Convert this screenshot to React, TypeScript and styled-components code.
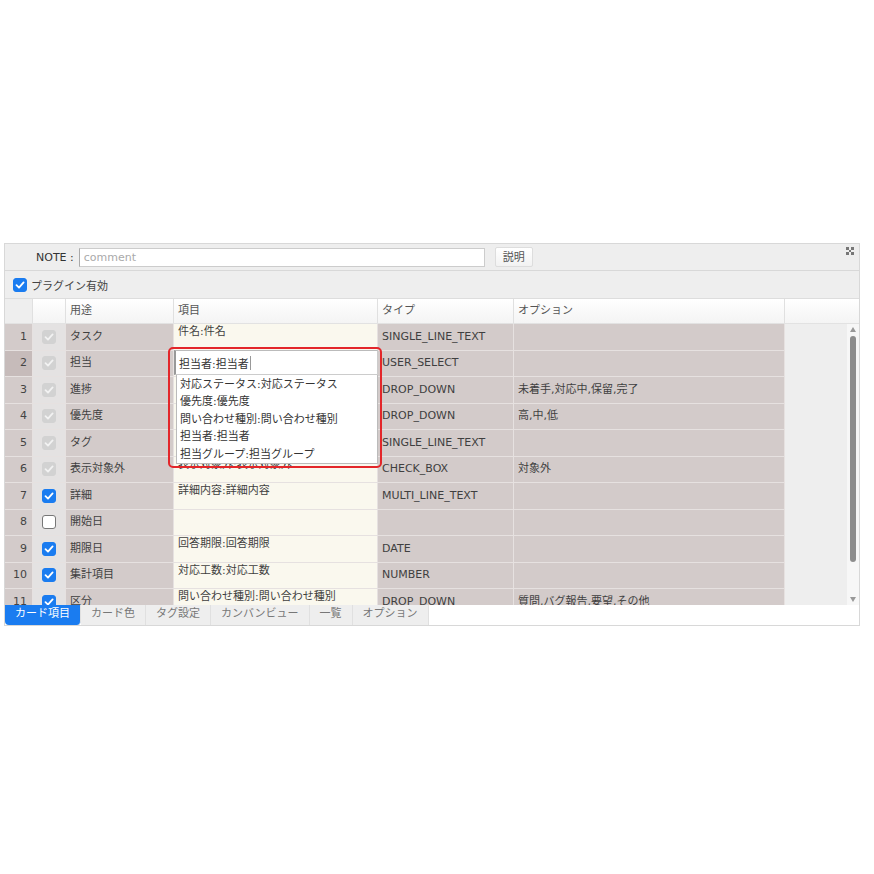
import styled, { createGlobalStyle } from 'styled-components';

const GlobalStyle = createGlobalStyle`
  html, body {
    margin: 0;
    padding: 0;
    background: #fff;
    font-family: "DejaVu Sans", "Noto Sans CJK JP", sans-serif;
    font-size: 11px;
    color: #444;
  }
`;

type Row = {
  no: number;
  check: 'locked' | 'on' | 'off';
  usage: string;
  item: string;
  type: string;
  option: string;
};

const rows: Row[] = [
  { no: 1, check: 'locked', usage: 'タスク', item: '件名:件名', type: 'SINGLE_LINE_TEXT', option: '' },
  { no: 2, check: 'locked', usage: '担当', item: '', type: 'USER_SELECT', option: '' },
  { no: 3, check: 'locked', usage: '進捗', item: '', type: 'DROP_DOWN', option: '未着手,対応中,保留,完了' },
  { no: 4, check: 'locked', usage: '優先度', item: '', type: 'DROP_DOWN', option: '高,中,低' },
  { no: 5, check: 'locked', usage: 'タグ', item: '', type: 'SINGLE_LINE_TEXT', option: '' },
  { no: 6, check: 'locked', usage: '表示対象外', item: '表示対象外:表示対象外', type: 'CHECK_BOX', option: '対象外' },
  { no: 7, check: 'on', usage: '詳細', item: '詳細内容:詳細内容', type: 'MULTI_LINE_TEXT', option: '' },
  { no: 8, check: 'off', usage: '開始日', item: '', type: '', option: '' },
  { no: 9, check: 'on', usage: '期限日', item: '回答期限:回答期限', type: 'DATE', option: '' },
  { no: 10, check: 'on', usage: '集計項目', item: '対応工数:対応工数', type: 'NUMBER', option: '' },
  { no: 11, check: 'on', usage: '区分', item: '問い合わせ種別:問い合わせ種別', type: 'DROP_DOWN', option: '質問,バグ報告,要望,その他' },
];

const options = [
  '対応ステータス:対応ステータス',
  '優先度:優先度',
  '問い合わせ種別:問い合わせ種別',
  '担当者:担当者',
  '担当グループ:担当グループ',
];

const tabs = ['カード項目', 'カード色', 'タグ設定', 'カンバンビュー', '一覧', 'オプション'];

const COLS = '28px 33px 108px 204px 136px 271px 1fr';

const Panel = styled.div`
  position: relative;
  margin: 243px 0 0 4px;
  width: 856px;
  box-sizing: border-box;
  border: 1px solid #d8d8d8;
  background: #eee;
`;

const Toolbar = styled.div`
  display: flex;
  align-items: center;
  height: 26px;
  padding-left: 31px;
  border-bottom: 1px solid #d8d8d8;
  gap: 4px;
`;

const NoteLabel = styled.span`
  color: #333;
  margin-right: 1px;
`;

const NoteInput = styled.div`
  width: 406px;
  height: 19px;
  box-sizing: border-box;
  border: 1px solid #ccc;
  border-left-color: #aaa;
  background: #fff;
  color: #aaa;
  padding-left: 4px;
  line-height: 17px;
`;

const Button = styled.div`
  margin-left: 6px;
  height: 20px;
  padding: 0 7px;
  line-height: 19px;
  box-sizing: border-box;
  border: 1px solid #ddd;
  border-radius: 2px;
  background: linear-gradient(#fff, #f2f2f2);
  color: #555;
`;

const Expand = styled.div`
  margin-left: auto;
  margin-right: 5px;
  align-self: flex-start;
  margin-top: 3px;
  display: flex;
`;

const PluginRow = styled.label`
  display: flex;
  align-items: center;
  height: 27px;
  padding-left: 8px;
  gap: 4px;
  border-bottom: 1px solid #ddd;
  color: #444;
`;

const Grid = styled.div`
  display: grid;
  grid-template-columns: ${COLS};
`;

const HeadRow = styled(Grid)`
  height: 25px;
  background: linear-gradient(#fff, #f4f4f4);
  border-bottom: 1px solid #e2e2e2;
  box-sizing: border-box;
`;

const HeadCell = styled.div<{ $blank?: boolean; $last?: boolean }>`
  border-right: ${(p) => (p.$last ? 'none' : '1px solid #e0e0e0')};
  padding-left: 4px;
  line-height: 23px;
  color: #555;
  background: ${(p) => (p.$blank ? '#eee' : 'transparent')};
`;

const Body = styled.div`
  display: flex;
  height: 281px;
  overflow: hidden;
`;

const Rows = styled.div`
  flex: 1;
`;

const BodyRow = styled(Grid)`
  height: 26.5px;
`;

const Cell = styled.div<{ $bg: string; $top?: boolean }>`
  background: ${(p) => p.$bg};
  border-bottom: 1px solid #e6e1e0;
  border-right: 1px solid #e6e1e0;
  box-sizing: border-box;
  display: flex;
  align-items: ${(p) => (p.$top ? 'flex-start' : 'center')};
  padding: ${(p) => (p.$top ? '1px 4px 0' : '0 4px')};
  line-height: 14px;
  white-space: nowrap;
  overflow: hidden;
  color: #3f3f3f;
`;

const NoCell = styled(Cell)`
  justify-content: flex-end;
  padding-right: 5px;
  color: #444;
`;

const CheckCell = styled(Cell)`
  justify-content: center;
`;

const Box = styled.span<{ $state: 'locked' | 'on' | 'off' }>`
  width: 14px;
  height: 14px;
  box-sizing: border-box;
  border-radius: 3px;
  display: inline-flex;
  align-items: center;
  justify-content: center;
  background: ${(p) => (p.$state === 'on' ? '#1a7cf0' : p.$state === 'locked' ? '#d2d2d2' : '#fff')};
  border: 1px solid ${(p) => (p.$state === 'on' ? '#1a7cf0' : p.$state === 'locked' ? '#d2d2d2' : '#777')};
`;

const Filler = styled.div`
  background: #eee;
`;

const Scrollbar = styled.div`
  width: 12px;
  background: #f7f7f7;
  display: flex;
  flex-direction: column;
  align-items: center;
  padding: 3px 0;
  box-sizing: border-box;
`;

const Arrow = styled.div<{ $down?: boolean }>`
  width: 0;
  height: 0;
  border-left: 3.5px solid transparent;
  border-right: 3.5px solid transparent;
  ${(p) => (p.$down ? 'border-top: 5px solid #999;' : 'border-bottom: 5px solid #999;')}
`;

const Thumb = styled.div`
  width: 6px;
  height: 226px;
  margin-top: 4px;
  border-radius: 3px;
  background: #8d8d8d;
`;

const Spacer = styled.div`
  flex: 1;
`;

const TabBar = styled.div`
  display: flex;
  height: 20px;
  background: #fff;
`;

const Tab = styled.div<{ $active?: boolean }>`
  padding: 0 10px;
  line-height: 18px;
  color: ${(p) => (p.$active ? '#fff' : '#777')};
  background: ${(p) => (p.$active ? '#1a7cf0' : '#eee')};
  border-right: 1px solid #e0e0e0;
  border-radius: ${(p) => (p.$active ? '0 0 4px 4px' : '0')};
`;

const Dropdown = styled.div`
  position: absolute;
  left: 163px;
  top: 103px;
  width: 214px;
  height: 121px;
  box-sizing: border-box;
  border: 2px solid #e3262a;
  border-radius: 5px;
  padding: 1px 2px 0 4px;
`;

const ComboInput = styled.div`
  height: 25px;
  box-sizing: border-box;
  background: #fff;
  border: 1px solid #ccc;
  border-left: 2px solid #999;
  border-top: 1px solid #bbb;
  padding-left: 3px;
  color: #333;
  display: flex;
  align-items: center;
`;

const Caret = styled.span`
  width: 1px;
  height: 14px;
  background: #999;
  margin-left: 1px;
`;

const List = styled.ul`
  list-style: none;
  margin: 0 0 0 2px;
  padding: 1px 0 0 3px;
  height: 89px;
  box-sizing: border-box;
  background: #fff;
  border: 1px solid #bbb;
  border-top: none;
  overflow: hidden;
`;

const Option = styled.li`
  height: 17.4px;
  line-height: 18px;
  color: #333;
  white-space: nowrap;
`;

const Check = ({ color }: { color: string }) => (
  <svg width="10" height="10" viewBox="0 0 10 10">
    <path d="M1.5 5.2 L4 7.6 L8.6 2.4" fill="none" stroke={color} strokeWidth="1.8" strokeLinecap="round" strokeLinejoin="round" />
  </svg>
);

const ExpandIcon = () => (
  <svg width="8" height="8" viewBox="0 0 8 8" fill="#777">
    <rect x="0" y="0" width="3" height="3" />
    <rect x="5" y="0" width="3" height="3" />
    <rect x="0" y="5" width="3" height="3" />
    <rect x="5" y="5" width="3" height="3" />
    <rect x="3" y="3" width="2" height="2" />
  </svg>
);

const CELL = '#d3cbca';
const ITEM = '#faf8ee';
const CHECKCOL = '#e4e2e2';

const App = () => {
  return (
    <>
      <GlobalStyle />
      <Panel>
        <Toolbar>
          <NoteLabel>NOTE :</NoteLabel>
          <NoteInput>comment</NoteInput>
          <Button>説明</Button>
          <Expand>
            <ExpandIcon />
          </Expand>
        </Toolbar>
        <PluginRow>
          <Box $state="on">
            <Check color="#fff" />
          </Box>
          プラグイン有効
        </PluginRow>
        <HeadRow>
          <HeadCell $blank />
          <HeadCell />
          <HeadCell>用途</HeadCell>
          <HeadCell>項目</HeadCell>
          <HeadCell>タイプ</HeadCell>
          <HeadCell>オプション</HeadCell>
          <HeadCell $last />
        </HeadRow>
        <Body>
          <Rows>
            {rows.map((r) => (
              <BodyRow key={r.no}>
                <NoCell $bg={r.no === 2 ? '#c6bbba' : CELL}>{r.no}</NoCell>
                <CheckCell $bg={CHECKCOL}>
                  <Box $state={r.check}>
                    {r.check !== 'off' && <Check color={r.check === 'on' ? '#fff' : '#f2f2f2'} />}
                  </Box>
                </CheckCell>
                <Cell $bg={CELL}>{r.usage}</Cell>
                <Cell $bg={ITEM} $top>{r.item}</Cell>
                <Cell $bg={CELL}>{r.type}</Cell>
                <Cell $bg={CELL}>{r.option}</Cell>
                <Filler />
              </BodyRow>
            ))}
          </Rows>
          <Scrollbar>
            <Arrow />
            <Thumb />
            <Spacer />
            <Arrow $down />
          </Scrollbar>
        </Body>
        <TabBar>
          {tabs.map((t, i) => (
            <Tab key={t} $active={i === 0}>
              {t}
            </Tab>
          ))}
        </TabBar>
        <Dropdown>
          <ComboInput>
            担当者:担当者
            <Caret />
          </ComboInput>
          <List>
            {options.map((o) => (
              <Option key={o}>{o}</Option>
            ))}
          </List>
        </Dropdown>
      </Panel>
    </>
  );
};

export default App;
